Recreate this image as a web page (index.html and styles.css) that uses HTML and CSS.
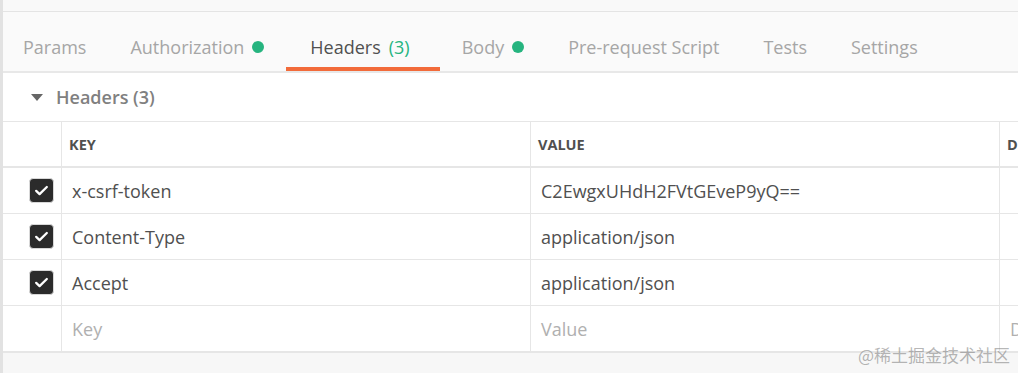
FILE: index.html
```html
<!DOCTYPE html>
<html lang="en">
  <head>
    <meta charset="UTF-8" />
    <meta name="viewport" content="width=device-width, initial-scale=1.0" />
    <title>Headers</title>
    <link rel="stylesheet" href="styles.css">
  </head>
  <body>
    <div class="app">
      <div class="topstrip"></div>

      <nav class="tabs">
        <a class="tab">Params</a>
        <a class="tab">Authorization <span class="dot"></span></a>
        <a class="tab active">Headers <span class="count">(3)</span></a>
        <a class="tab">Body <span class="dot"></span></a>
        <a class="tab">Pre-request Script</a>
        <a class="tab">Tests</a>
        <a class="tab">Settings</a>
      </nav>

      <section class="panel">
        <div class="section-title">
          <span class="caret"></span>
          Headers (3)
        </div>

        <div class="kv">
          <div class="row head">
            <div class="cell"></div>
            <div class="cell">KEY</div>
            <div class="cell">VALUE</div>
            <div class="cell">DESCRIPTION</div>
          </div>
          <div class="row">
            <div class="cell check"><span class="box"><svg viewBox="0 0 24 24" width="17" height="17"><path d="M4.5 12.5l4.8 4.6L19.5 7" fill="none" stroke="#fff" stroke-width="3.2" stroke-linecap="round" stroke-linejoin="round"/></svg></span></div>
            <div class="cell">x-csrf-token</div>
            <div class="cell">C2EwgxUHdH2FVtGEveP9yQ==</div>
            <div class="cell"></div>
          </div>
          <div class="row">
            <div class="cell check"><span class="box"><svg viewBox="0 0 24 24" width="17" height="17"><path d="M4.5 12.5l4.8 4.6L19.5 7" fill="none" stroke="#fff" stroke-width="3.2" stroke-linecap="round" stroke-linejoin="round"/></svg></span></div>
            <div class="cell">Content-Type</div>
            <div class="cell">application/json</div>
            <div class="cell"></div>
          </div>
          <div class="row">
            <div class="cell check"><span class="box"><svg viewBox="0 0 24 24" width="17" height="17"><path d="M4.5 12.5l4.8 4.6L19.5 7" fill="none" stroke="#fff" stroke-width="3.2" stroke-linecap="round" stroke-linejoin="round"/></svg></span></div>
            <div class="cell">Accept</div>
            <div class="cell">application/json</div>
            <div class="cell"></div>
          </div>
          <div class="row last">
            <div class="cell"></div>
            <div class="cell placeholder">Key</div>
            <div class="cell placeholder">Value</div>
            <div class="cell placeholder">Description</div>
          </div>
        </div>
      </section>

      <div class="watermark">@稀土掘金技术社区</div>
    </div>
  </body>
</html>
```

FILE: styles.css
```css
html,
body {
  margin: 0;
  padding: 0;
}

body {
  font-family: "Open Sans", "Noto Sans CJK SC", sans-serif;
  background-color: #f7f7f7;
  color: #505050;
  width: 1018px;
  height: 373px;
  overflow: hidden;
}

.app {
  position: relative;
  height: 373px;
  border-left: 3px solid #e2e2e2;
  background-color: #f7f7f7;
}

.topstrip {
  height: 11px;
  background-color: #f9f9f9;
  border-bottom: 1px solid #e4e4e4;
}

.tabs {
  display: flex;
  height: 59px;
  background-color: #fafafa;
  border-bottom: 2px solid #e8e8e8;
}

.tab {
  display: flex;
  align-items: center;
  gap: 8px;
  padding: 15px 22px 0;
  font-size: 18px;
  color: #a6a6a6;
  white-space: nowrap;
  border-bottom: 4px solid transparent;
}

.tab:first-child {
  padding-left: 20px;
}

.tab.active {
  padding-left: 24px;
  padding-right: 30px;
  color: #505050;
  border-bottom-color: #f26b3a;
}

.count {
  color: #26b47f;
}

.dot {
  display: inline-block;
  width: 12px;
  height: 12px;
  border-radius: 50%;
  background-color: #26b47f;
}

.panel {
  background-color: #ffffff;
}

.section-title {
  display: flex;
  align-items: center;
  height: 48px;
  padding-left: 28px;
  font-size: 18px;
  font-weight: 600;
  color: #808080;
  gap: 13px;
}

.caret {
  width: 0;
  height: 0;
  border-left: 6px solid transparent;
  border-right: 6px solid transparent;
  border-top: 7px solid #666;
}

.kv {
  border-top: 1px solid #e6e6e6;
}

.row {
  display: grid;
  grid-template-columns: 58px 469px 469px 200px;
  height: 45px;
  border-bottom: 1px solid #e6e6e6;
}

.row.head {
  height: 44px;
  border-bottom: 2px solid #e6e6e6;
}

.row.last {
  border-bottom: 2px solid #e6e6e6;
}

.cell {
  display: flex;
  align-items: center;
  padding-left: 10px;
  border-left: 1px solid #e6e6e6;
  font-size: 18px;
  color: #505050;
  white-space: nowrap;
  overflow: hidden;
}

.cell:first-child {
  border-left: none;
  padding-left: 0;
}

.head .cell {
  font-size: 14.5px;
  font-weight: 700;
  padding-left: 7px;
}

.placeholder {
  color: #b0b0b0;
}

.check {
  justify-content: flex-start;
  padding-left: 26px !important;
}

.box {
  display: flex;
  align-items: center;
  justify-content: center;
  width: 23px;
  height: 23px;
  background-color: #2b2b2b;
  border: 1px solid #d8d8d8;
  border-radius: 4px;
}

.watermark {
  position: absolute;
  right: 8px;
  bottom: 6px;
  font-size: 17px;
  color: rgba(120, 120, 120, 0.55);
  font-family: "Noto Sans CJK SC", sans-serif;
}
```
